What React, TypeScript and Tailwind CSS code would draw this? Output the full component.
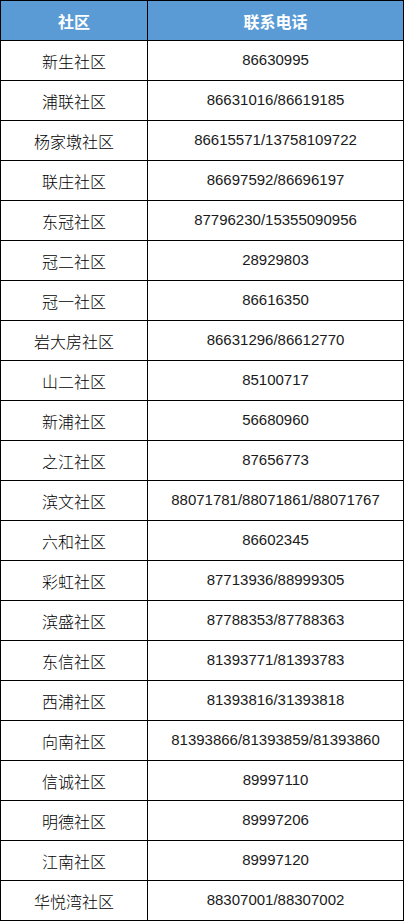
import React from "react";

const rows: [string, string][] = [
  ["新生社区", "86630995"],
  ["浦联社区", "86631016/86619185"],
  ["杨家墩社区", "86615571/13758109722"],
  ["联庄社区", "86697592/86696197"],
  ["东冠社区", "87796230/15355090956"],
  ["冠二社区", "28929803"],
  ["冠一社区", "86616350"],
  ["岩大房社区", "86631296/86612770"],
  ["山二社区", "85100717"],
  ["新浦社区", "56680960"],
  ["之江社区", "87656773"],
  ["滨文社区", "88071781/88071861/88071767"],
  ["六和社区", "86602345"],
  ["彩虹社区", "87713936/88999305"],
  ["滨盛社区", "87788353/87788363"],
  ["东信社区", "81393771/81393783"],
  ["西浦社区", "81393816/31393818"],
  ["向南社区", "81393866/81393859/81393860"],
  ["信诚社区", "89997110"],
  ["明德社区", "89997206"],
  ["江南社区", "89997120"],
  ["华悦湾社区", "88307001/88307002"],
];

export default function App() {
  return (
    <div className="w-[405px] h-[921px] bg-white">
      <div className="w-[404px] border-l border-t border-black grid grid-cols-[147px_256px]">
        <div className="h-[40px] border-r border-b border-black bg-[#5b9bd5] flex items-center justify-center text-white font-bold text-[16px] font-['Noto_Sans_CJK_SC',sans-serif]">
          社区
        </div>
        <div className="h-[40px] border-r border-b border-black bg-[#5b9bd5] flex items-center justify-center text-white font-bold text-[16px] font-['Noto_Sans_CJK_SC',sans-serif]">
          联系电话
        </div>
        {rows.map(([name, phone], i) => (
          <React.Fragment key={i}>
            <div className="h-[40px] border-r border-b border-black flex items-center justify-center text-black text-[16px] font-light font-['Noto_Sans_CJK_SC',sans-serif]">
              {name}
            </div>
            <div className="h-[40px] border-r border-b border-black flex items-center justify-center text-[#1a1a1a] text-[15px] font-['Liberation_Sans','Noto_Sans_CJK_SC',sans-serif]">
              {phone}
            </div>
          </React.Fragment>
        ))}
      </div>
    </div>
  );
}
